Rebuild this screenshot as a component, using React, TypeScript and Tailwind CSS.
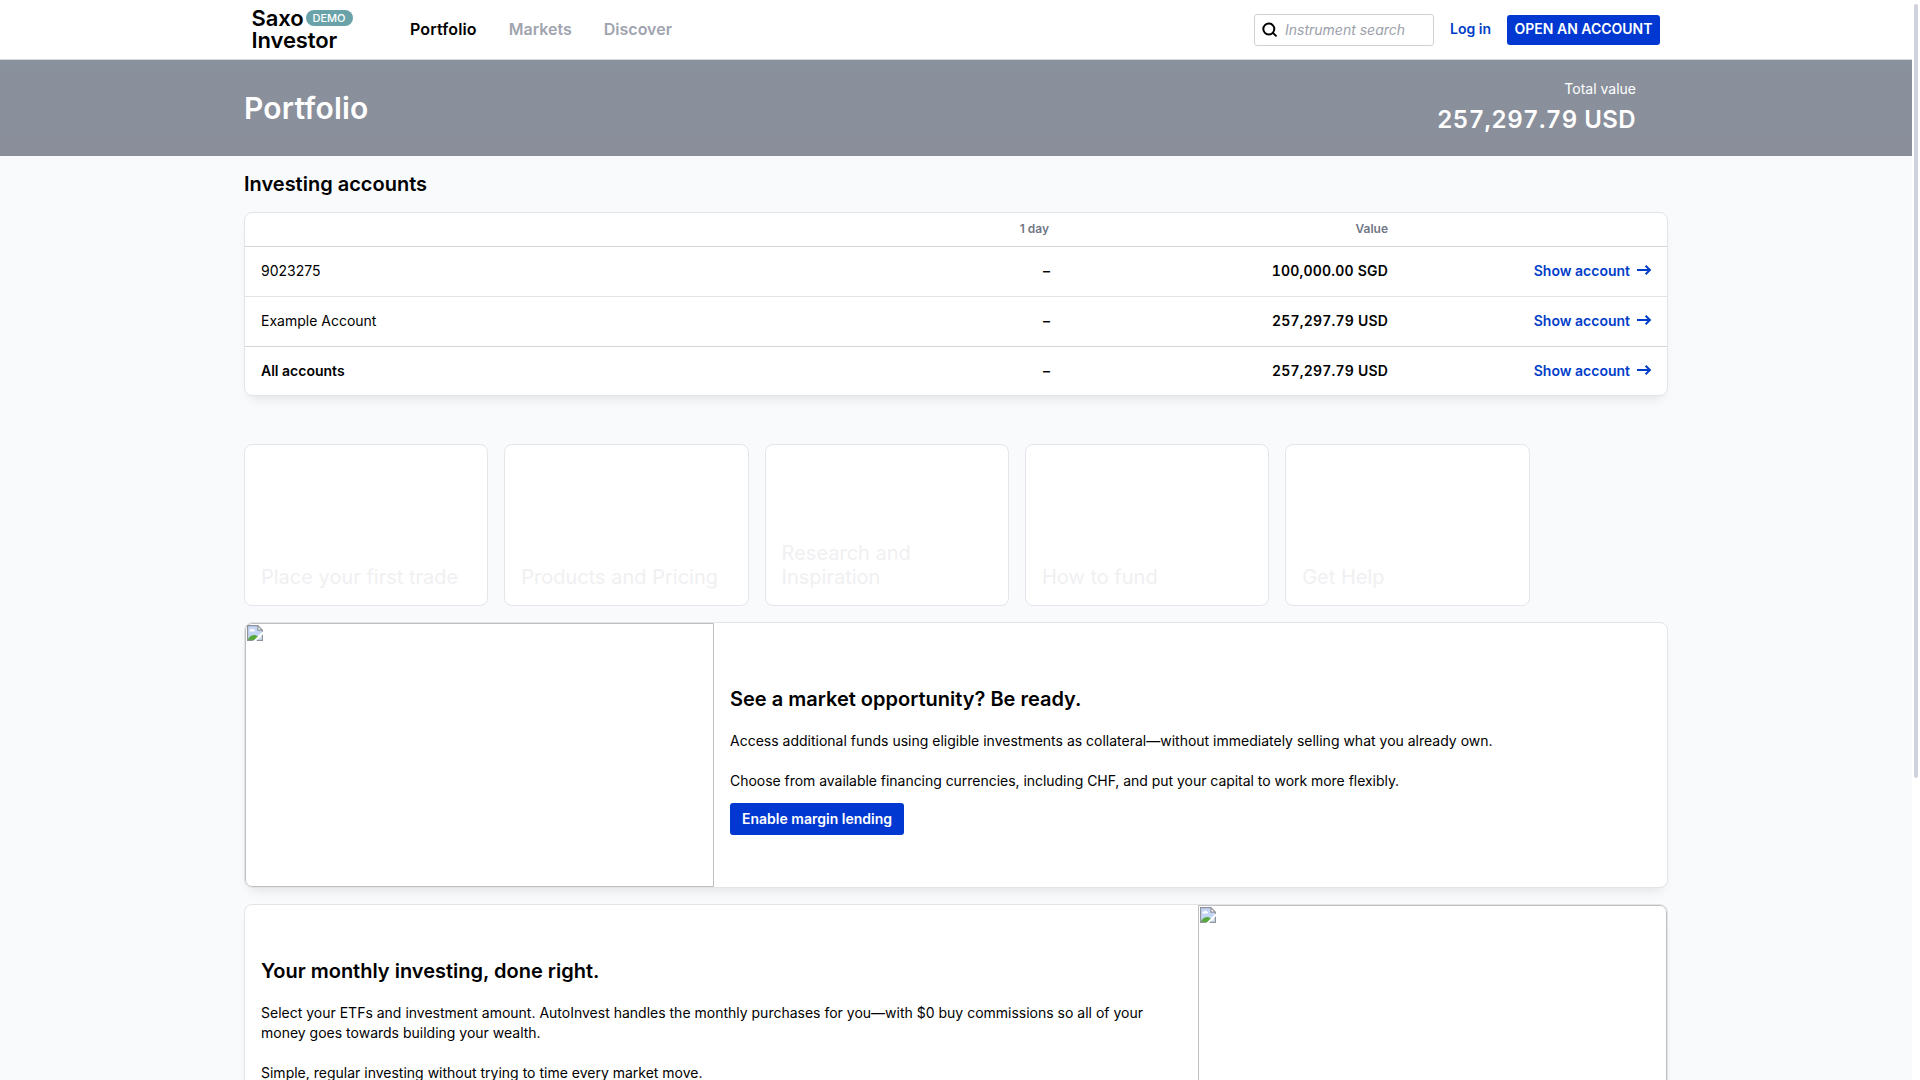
import React from "react";

const navItems = [
  { label: "Portfolio", style: "text-black tracking-[0.14px]" },
  { label: "Markets", style: "text-[#a0a4ae]" },
  { label: "Discover", style: "text-[#a0a4ae]" },
];

const accounts = [
  { name: "9023275", value: "100,000.00 SGD", row: "h-[50px] pb-0.5 border-b border-[#e2e3e8]" },
  { name: "Example Account", value: "257,297.79 USD", row: "h-[50px] pb-0.5 border-b border-[#d2d5da]" },
  { name: "All accounts", value: "257,297.79 USD", row: "h-[48px] font-semibold" },
];

const tiles = [
  "Place your first trade",
  "Products and Pricing",
  "Research and Inspiration",
  "How to fund",
  "Get Help",
];

const columns = "grid grid-cols-[804px_339px_279px] items-center";

function SearchIcon() {
  return (
    <svg className="size-4 shrink-0" viewBox="0 0 16 16" fill="none" stroke="#000" strokeWidth="2">
      <circle cx="6.8" cy="7" r="5.5" />
      <path d="M10.7 10.6 14.5 14.4" />
    </svg>
  );
}

function ArrowIcon() {
  return (
    <svg className="mb-0.5 h-3 w-4 shrink-0" viewBox="0 0 16 12" fill="none" stroke="currentColor" strokeWidth="2">
      <path d="M1 6H14M9.6 1.7 13.9 6 9.6 10.3" />
    </svg>
  );
}

function BrokenImage({ className }: { className: string }) {
  return (
    <div className={`h-[264px] shrink-0 border border-[#c0c0c0] p-px ${className}`}>
      <svg className="size-4" viewBox="1 1 14 14">
        <path d="M1.5 1.5H10.5L14.5 5.5V7L6.5 14.5H1.5Z" fill="#c5d5f5" />
        <path d="M1.5 14.5C2.5 11.5 5 9.5 7.5 9.8 9 10 10 10.8 10.5 11L6.8 14.5Z" fill="#56a83b" />
        <path d="M3 6.2C3 5 4.2 4.6 4.8 5 5.2 3.8 7 4 7.2 5.2 8.2 5.2 8.4 6.6 7.4 6.6H3.6Z" fill="#fff" />
        <path d="M14.5 9.5V14.5H9.5Z" fill="#d5e2f3" />
        <path d="M10.5 1.5V5.5H14.5Z" fill="#fff" />
        <path
          d="M6 14.5H1.5V1.5H10.5L14.5 5.5V7M10.5 1.5V5.5H14.5M14.5 9.5V14.5H9.5"
          fill="none"
          stroke="#8f9299"
        />
      </svg>
    </div>
  );
}

function Header() {
  return (
    <header className="h-[60px] border-b border-[#d9dbe0] bg-white">
      <div className="mx-auto flex h-full w-[1410px] items-center justify-between pr-px">
        <div className="flex items-center pb-0.5">
          <div className="w-[159px] pl-[0.5px] text-[22px] leading-[22px] font-semibold tracking-[-0.1px]">
            <div className="flex h-[22px] items-center gap-[2px]">
              <span>Saxo</span>
              <span className="flex h-4 w-[47px] items-center justify-center rounded-full bg-[#6aa2a9] text-[11px] leading-4 font-medium tracking-normal text-white">
                DEMO
              </span>
            </div>
            <div>Investor</div>
          </div>
          <nav className="flex gap-8 text-base font-semibold">
            {navItems.map((item) => (
              <a key={item.label} className={item.style}>
                {item.label}
              </a>
            ))}
          </nav>
        </div>
        <div className="flex items-center text-sm font-semibold">
          <div className="flex h-8 w-[180px] items-center gap-[7px] rounded-[3px] border border-[#cfd1d7] px-[7px] font-normal text-[#9ca0aa] italic">
            <SearchIcon />
            Instrument search
          </div>
          <a className="ml-4 pb-0.5 text-[#003dc8]">Log in</a>
          <button className="ml-4 h-[30px] w-[153px] rounded-[3px] bg-[#0038d1] pb-0.5 whitespace-nowrap text-white">
            OPEN AN ACCOUNT
          </button>
        </div>
      </div>
    </header>
  );
}

function AccountsTable() {
  return (
    <section className="rounded-lg border border-[#e2e4e9] bg-white text-sm shadow-[0_8px_12px_-6px_rgba(0,0,0,0.1)]">
      <div className={`h-[34px] border-b border-[#d2d5da] pb-0.5 text-xs font-semibold text-[#717785] ${columns}`}>
        <span className="text-right">1 day</span>
        <span className="text-right">Value</span>
      </div>
      {accounts.map((account) => (
        <div key={account.name} className={`${columns} ${account.row}`}>
          <div className="-mr-px flex justify-between pl-4">
            <span>{account.name}</span>
            <span className="font-semibold">–</span>
          </div>
          <span className="text-right font-semibold tracking-[0.2px] tabular-nums">{account.value}</span>
          <a className="flex items-center justify-end gap-1.5 pr-[15px] font-semibold text-[#003dc8]">
            Show account
            <ArrowIcon />
          </a>
        </div>
      ))}
    </section>
  );
}

const promoClass =
  "flex h-[266px] shrink-0 overflow-hidden rounded-lg border border-[#e2e4e9] bg-white shadow-[0_8px_12px_-6px_rgba(0,0,0,0.1)]";

export default function App() {
  return (
    <div className="flex h-[1080px] w-[1920px] overflow-hidden bg-white font-['Inter',sans-serif] text-black">
      <div className="w-[1912px] overflow-hidden bg-[#f9fafc]">
        <Header />
        <div className="h-24 bg-gradient-to-b from-[#89919c] to-[#8a8e9b] text-white">
          <div className="mx-auto flex h-full w-[1424px] items-center justify-between pr-8">
            <h1 className="text-[30px] font-semibold tracking-[0.2px]">Portfolio</h1>
            <div className="pb-px text-right">
              <div className="text-sm">Total value</div>
              <div className="mt-[5px] text-2xl leading-8 font-semibold tracking-[0.35px] tabular-nums">
                257,297.79 USD
              </div>
            </div>
          </div>
        </div>
        <main className="mx-auto flex w-[1424px] flex-col">
          <h2 className="flex h-14 items-center text-xl font-semibold">Investing accounts</h2>
          <AccountsTable />
          <div className="mt-12 grid w-[1285.5px] grid-cols-5 gap-4">
            {tiles.map((tile) => (
              <div
                key={tile}
                className="flex h-[162px] items-end rounded-lg border border-[#e4e6eb] bg-white p-4 text-xl leading-6 text-[#f0f0f2]"
              >
                {tile}
              </div>
            ))}
          </div>
          <section className={`mt-4 ${promoClass}`}>
            <BrokenImage className="w-[469px] rounded-l-[7px]" />
            <div className="flex flex-col items-start pt-[61px] pl-4 text-sm">
              <h3 className="text-xl leading-[30px] font-semibold">See a market opportunity? Be ready.</h3>
              <p className="mt-[17px] leading-5">
                Access additional funds using eligible investments as collateral—without immediately selling what you
                already own.
              </p>
              <p className="mt-5 leading-5 tracking-[-0.035px]">
                Choose from available financing currencies, including CHF, and put your capital to work more flexibly.
              </p>
              <button className="mt-3 h-8 w-[174px] rounded-[3px] bg-[#0038d1] font-semibold text-white">
                Enable margin lending
              </button>
            </div>
          </section>
          <section className={`mt-4 ${promoClass}`}>
            <div className="flex-1 px-4 pt-[51px] text-sm">
              <h3 className="text-xl leading-[30px] font-semibold">Your monthly investing, done right.</h3>
              <p className="mt-[17px] leading-5">
                Select your ETFs and investment amount. AutoInvest handles the monthly purchases for you—with $0 buy
                commissions so all of your money goes towards building your wealth.
              </p>
              <p className="mt-5 leading-5">Simple, regular investing without trying to time every market move.</p>
            </div>
            <BrokenImage className="w-[469px] rounded-r-[7px]" />
          </section>
        </main>
      </div>
      <div className="w-2 shrink-0 bg-white pt-1 pl-0.5">
        <div className="h-[774px] w-1 rounded-full bg-[#d0d2db]" />
      </div>
    </div>
  );
}
